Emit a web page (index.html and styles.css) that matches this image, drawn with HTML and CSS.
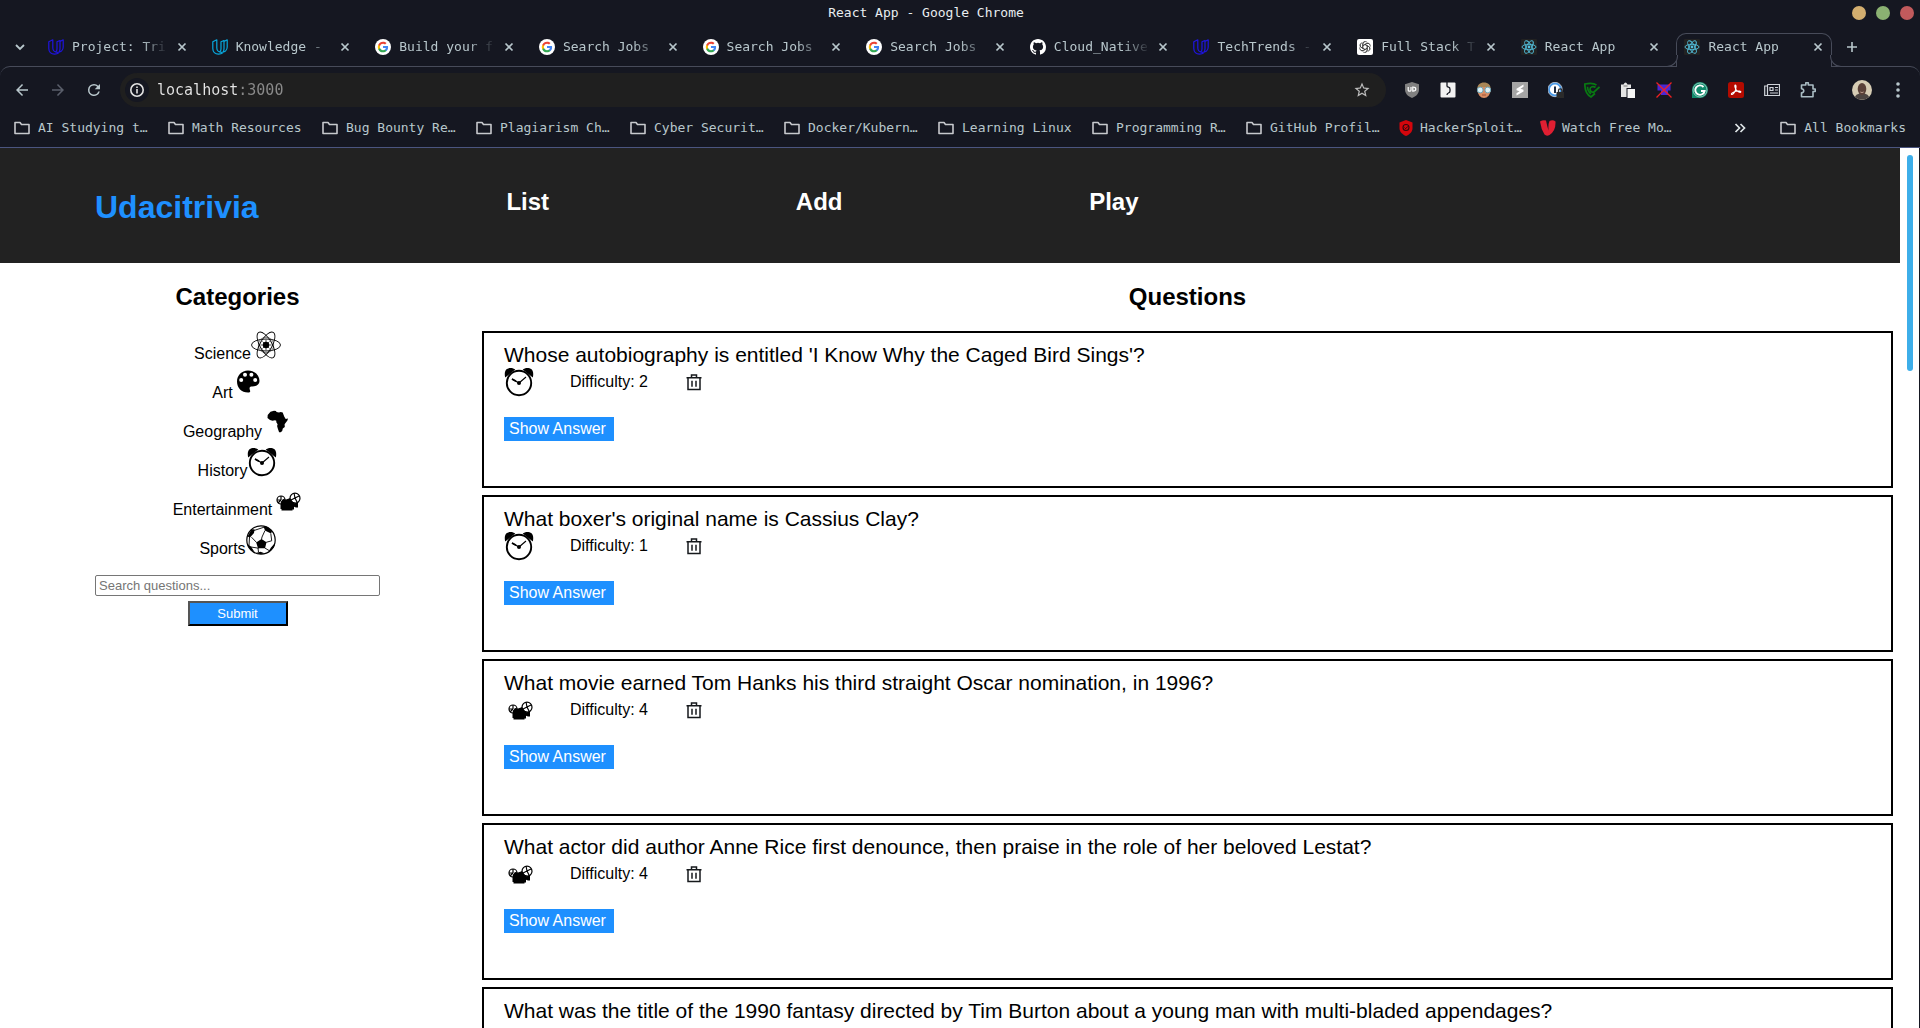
FILE: index.html
```html
<!DOCTYPE html>
<html lang="en">
<head>
<meta charset="utf-8">
<title>React App</title>
<link rel="stylesheet" href="styles.css">
</head>
<body>
<svg class="sprite" aria-hidden="true">
  <symbol id="udacity" viewBox="0 0 16 16"><path d="M.8 2.800 4.800.8V9c0 2.600 2 4.300 4.700 4.300 3 0 5.700-1.800 5.700-5.300V.8L12 2.600v7.200c0 3.300-2 5.300-5.500 5.300C3 15.100.8 12.900.8 9.600zM12 2.600V1.500L9 2.800V10c0 1.500-.4 2.500-1.500 3" fill="none" stroke="currentColor" stroke-width="1.200" stroke-linejoin="round"/></symbol>
  <symbol id="google" viewBox="0 0 32 32"><circle cx="16" cy="16" r="16" fill="#fff"/><g transform="translate(4.500 4.500) scale(.96)"><path fill="#4285f4" d="M22.560 12.250c0-.78-.07-1.530-.2-2.250H12v4.260h5.920a5.060 5.060 0 0 1-2.200 3.320v2.770h3.570c2.080-1.920 3.270-4.740 3.270-8.100z"/><path fill="#34a853" d="M12 23c2.970 0 5.460-.98 7.280-2.660l-3.570-2.770c-.98.66-2.230 1.060-3.710 1.060-2.860 0-5.290-1.930-6.160-4.530H2.180v2.840A11 11 0 0 0 12 23z"/><path fill="#fbbc05" d="M5.840 14.090a6.600 6.600 0 0 1 0-4.180V7.070H2.180a11 11 0 0 0 0 9.860z"/><path fill="#ea4335" d="M12 5.380c1.620 0 3.060.56 4.210 1.640l3.150-3.150C17.450 2.090 14.970 1 12 1A11 11 0 0 0 2.180 7.070l3.660 2.840C6.710 7.310 9.140 5.380 12 5.380z"/></g></symbol>
  <symbol id="github" viewBox="0 0 16 16"><path fill="#fff" d="M8 0C3.580 0 0 3.580 0 8c0 3.540 2.290 6.530 5.470 7.590.4.070.55-.17.55-.38 0-.19-.01-.82-.01-1.490-2.010.37-2.530-.49-2.690-.94-.09-.23-.48-.94-.82-1.130-.28-.15-.68-.52-.01-.53.63-.01 1.080.58 1.230.82.72 1.210 1.870.87 2.330.66.07-.52.28-.87.51-1.070-1.780-.2-3.640-.89-3.640-3.950 0-.87.31-1.590.82-2.150-.08-.2-.36-1.020.08-2.120 0 0 .67-.21 2.200.82a7.600 7.600 0 0 1 4 0c1.530-1.040 2.200-.82 2.200-.82.44 1.100.16 1.920.08 2.120.51.56.82 1.270.82 2.150 0 3.070-1.870 3.750-3.650 3.950.29.25.54.73.54 1.480 0 1.070-.01 1.930-.01 2.200 0 .21.15.46.55.38A8 8 0 0 0 16 8c0-4.420-3.580-8-8-8z"/></symbol>
  <symbol id="openai" viewBox="0 0 16 16"><rect width="16" height="16" rx="2" fill="#fff"/><g fill="none" stroke="#333" stroke-width=".7"><g id="petal"><path d="M5.800 9.200V5a2.500 2.500 0 0 1 4.500-1.500M5.800 6.700 9.400 4.600a2.500 2.500 0 0 1 3.300.8"/></g><use href="#petal" transform="rotate(60 8 8)"/><use href="#petal" transform="rotate(120 8 8)"/><use href="#petal" transform="rotate(180 8 8)"/><use href="#petal" transform="rotate(240 8 8)"/><use href="#petal" transform="rotate(300 8 8)"/></g></symbol>
  <symbol id="react" viewBox="0 0 16 16"><rect width="16" height="16" rx="1" fill="#222"/><g fill="none" stroke="#53c1de" stroke-width=".9"><ellipse cx="8" cy="8" rx="7" ry="2.700"/><ellipse cx="8" cy="8" rx="7" ry="2.700" transform="rotate(60 8 8)"/><ellipse cx="8" cy="8" rx="7" ry="2.700" transform="rotate(120 8 8)"/></g><circle cx="8" cy="8" r="1.400" fill="#53c1de"/></symbol>
  <symbol id="close" viewBox="0 0 16 16"><path d="m4.500 4.500 7 7m0-7-7 7" stroke="currentColor" stroke-width="1.700"/></symbol>
  <symbol id="folder" viewBox="0 0 16 14"><path d="M1 12.500v-11h5l1.500 2H15v9z" fill="none" stroke="currentColor" stroke-width="1.600" stroke-linejoin="round"/></symbol>
  <symbol id="science" viewBox="0 0 30 30"><g fill="none" stroke="#000" stroke-width=".9"><ellipse cx="15" cy="15" rx="14.500" ry="6"/><ellipse cx="15" cy="15" rx="14.500" ry="6" transform="rotate(60 15 15)"/><ellipse cx="15" cy="15" rx="14.500" ry="6" transform="rotate(120 15 15)"/><circle cx="15" cy="15" r="7.700" stroke-width=".5"/><path d="M15 9.500v11M9.500 15h11M11.500 11.500l7 7m0-7-7 7" stroke-width=".7"/></g><circle cx="15" cy="15" r="3.200"/></symbol>
  <symbol id="art" viewBox="0 0 30 30"><path fill-rule="evenodd" transform="translate(0 -2)" d="M15 3.500C8.500 3.500 4 8.500 4 14.500c0 6.500 4.500 11 11 11 1.800 0 2.500-.6 2.100-1.800-1-3-.8-4.200 2-4.200 4.500 0 7.400-2 7.400-5.500 0-6-5-10.500-11.500-10.500zM8.200 10.900a2 2 0 1 1 0 4 2 2 0 0 1 0-4zM12 5.700a2 2 0 1 1 0 4 2 2 0 0 1 0-4zm6.400 0a2 2 0 1 1 0 4 2 2 0 0 1 0-4zm3.800 5.200a2 2 0 1 1 0 4 2 2 0 0 1 0-4z"/></symbol>
  <symbol id="geography" viewBox="0 0 30 30"><path transform="translate(0 -1)" d="m8.500 4.700 3.500-1 2 .3.500 1 2.500.5 1.700-.6 2 .6 1.500 4 1.500 2.600 2.300-.5-.6 2-2.800 3.600.2 2.800-2 1.600-.6 2.300-1.500 1.400h-1.600l-1.400-4-.6-2.200.5-1.800-1.300-2v-1.500l-1.300-.6-2.500.6-2.500-.7L5.500 11l.2-3z"/></symbol>
  <symbol id="history" viewBox="0 0 30 30"><path d="M1.200 10.500C.5 8 .5 4 2.500 2.200 5 .3 9 .5 11.300 2.500zM28.800 10.500c.7-2.500.7-6.500-1.300-8.300C25 .3 21 .5 18.700 2.500z"/><circle cx="15" cy="16" r="12.200" fill="#fff" stroke="#000" stroke-width="1.900"/><path d="m8 12 7 4 7-6" fill="none" stroke="#000" stroke-width="1.100"/><path d="m8 12 4 2.300" stroke="#000" stroke-width="1.800"/><circle cx="15" cy="16" r="2"/></symbol>
  <symbol id="entertainment" viewBox="0 0 30 30"><g fill="none" stroke="#000" stroke-width="1.200"><circle cx="9" cy="14" r="4"/><circle cx="23" cy="12.200" r="5"/><path d="M9 14v-4m0 4H5m4 0-3 3M23 12l4-2m-4 2 2 4m-2-4-1-5m1 5-4 2"/></g><path d="M9 15.500 11 13l3 .5 3-1 1-.5 3 4h1.500v1.500l2-1h1.500v5h-2l-2-.7v2.700h-1.500v1H9.500v-1.500H8.500V18z"/></symbol>
  <symbol id="sports" viewBox="0 0 30 30"><circle cx="15" cy="15" r="14.200" fill="#fff" stroke="#000" stroke-width="1.200"/><path d="m15.500 14 5 3.300-1.500 6h-7l-1.800-5.700zM1.500 11.500 5.500 4.500 8.500 4.300 8 8l-4 4.500zM17.500 1.500l4.500.6 4 4.400-1 2-6-3zM1.500 19l3.500 2.500 3.500 5.500C4 25 2 22 1.500 19zM9.500 28l5-1.200 4 1.500c-3 1.200-6 1-9-.3zM22.500 26.500l2.500-4 4-4.500c-.3 4.500-3 7.500-6.500 8.500z"/><path d="m15.500 14.500.5-2.500L19 5.500M10.700 17.600 5.500 12.200M20.200 17.300l5.500-1.500L24.800 8.500M12 23.100l.5 4M19 23.100l4 2.400M8 5.500l10-3.300M3 20.500l.5-8.500M12.500 23.200 5 22" fill="none" stroke="#000" stroke-width=".9"/></symbol>
  <symbol id="trash" viewBox="0 0 20 20"><path d="M2.500 5.800h15M7.500 5.500V3h5v2.500M4 6v11.500h12V6M8 8.800v6M12 8.800v6" fill="none" stroke="#16191c" stroke-width="1.500"/></symbol>
</svg>

<div class="browser">
  <div class="titlebar">
    <div class="window-title">React App - Google Chrome</div>
    <div class="window-buttons">
      <button class="dot minimise" aria-label="Minimise"></button>
      <button class="dot maximise" aria-label="Maximise"></button>
      <button class="dot shut" aria-label="Close"></button>
    </div>
  </div>

  <div class="tabstrip">
    <button class="tab-search" aria-label="Search tabs"><svg width="12" height="12" viewBox="0 0 12 12"><path d="m2 4 4 4 4-4" fill="none" stroke="currentColor" stroke-width="1.800"/></svg></button>
    <div class="tabs">
      <div class="tab"><svg class="favicon navy"><use href="#udacity"/></svg><span class="tab-name">Project: Tri</span><button class="tab-close" aria-label="Close tab"><svg><use href="#close"/></svg></button></div>
      <div class="tab"><svg class="favicon cyan"><use href="#udacity"/></svg><span class="tab-name">Knowledge - </span><button class="tab-close" aria-label="Close tab"><svg><use href="#close"/></svg></button></div>
      <div class="tab"><svg class="favicon"><use href="#google"/></svg><span class="tab-name">Build your f</span><button class="tab-close" aria-label="Close tab"><svg><use href="#close"/></svg></button></div>
      <div class="tab"><svg class="favicon"><use href="#google"/></svg><span class="tab-name">Search Jobs</span><button class="tab-close" aria-label="Close tab"><svg><use href="#close"/></svg></button></div>
      <div class="tab"><svg class="favicon"><use href="#google"/></svg><span class="tab-name">Search Jobs</span><button class="tab-close" aria-label="Close tab"><svg><use href="#close"/></svg></button></div>
      <div class="tab"><svg class="favicon"><use href="#google"/></svg><span class="tab-name">Search Jobs</span><button class="tab-close" aria-label="Close tab"><svg><use href="#close"/></svg></button></div>
      <div class="tab"><svg class="favicon"><use href="#github"/></svg><span class="tab-name">Cloud_Native</span><button class="tab-close" aria-label="Close tab"><svg><use href="#close"/></svg></button></div>
      <div class="tab"><svg class="favicon navy"><use href="#udacity"/></svg><span class="tab-name">TechTrends -</span><button class="tab-close" aria-label="Close tab"><svg><use href="#close"/></svg></button></div>
      <div class="tab"><svg class="favicon"><use href="#openai"/></svg><span class="tab-name">Full Stack T</span><button class="tab-close" aria-label="Close tab"><svg><use href="#close"/></svg></button></div>
      <div class="tab"><svg class="favicon"><use href="#react"/></svg><span class="tab-name">React App</span><button class="tab-close" aria-label="Close tab"><svg><use href="#close"/></svg></button></div>
      <div class="tab active"><svg class="favicon"><use href="#react"/></svg><span class="tab-name">React App</span><button class="tab-close" aria-label="Close tab"><svg><use href="#close"/></svg></button></div>
    </div>
    <button class="new-tab" aria-label="New tab"><svg width="12" height="12" viewBox="0 0 12 12"><path d="M6 1v10M1 6h10" stroke="currentColor" stroke-width="1.600"/></svg></button>
  </div>

  <div class="toolbar">
    <div class="nav-buttons">
      <button aria-label="Back"><svg width="18" height="18" viewBox="0 0 24 24"><path fill="currentColor" d="M20 11H7.830l5.590-5.590L12 4l-8 8 8 8 1.410-1.410L7.830 13H20z"/></svg></button>
      <button class="disabled" aria-label="Forward"><svg width="18" height="18" viewBox="0 0 24 24"><path fill="currentColor" d="M4 13h12.170l-5.590 5.590L12 20l8-8-8-8-1.410 1.410L16.170 11H4z"/></svg></button>
      <button aria-label="Reload"><svg width="18" height="18" viewBox="0 0 24 24"><path fill="currentColor" d="M17.650 6.350A7.960 7.960 0 0 0 12 4a8 8 0 1 0 7.730 10h-2.080A6 6 0 1 1 12 6c1.660 0 3.140.69 4.220 1.780L13 11h7V4z"/></svg></button>
    </div>
    <div class="omnibox">
      <button class="site-info" aria-label="Site information"><svg width="16" height="16" viewBox="0 0 16 16"><circle cx="8" cy="8" r="6.200" fill="none" stroke="#e3e3e3" stroke-width="1.600"/><path d="M8 7v4.500M8 4.500v1.600" stroke="#e3e3e3" stroke-width="1.600"/></svg></button>
      <input class="address" type="text" aria-label="Address" value="localhost:3000">
      <button class="bookmark-star" aria-label="Bookmark this page"><svg width="18" height="18" viewBox="0 0 24 24"><path fill="#bdbdbd" d="M22 9.240l-7.190-.62L12 2 9.190 8.630 2 9.240l5.460 4.730L5.820 21 12 17.270 18.180 21l-1.630-7.030zM12 15.400l-3.760 2.270 1-4.280-3.320-2.880 4.380-.38L12 6.100l1.710 4.040 4.380.38-3.320 2.880 1 4.280z"/></svg></button>
    </div>
    <div class="extensions">
      <button aria-label="Shield"><svg viewBox="0 0 16 16"><path d="m8 0 7 2.300v5.200c0 4-3 7-7 8.500-4-1.500-7-4.500-7-8.500V2.300z" fill="#808080"/><path d="M4.200 5v3.200q0 1 1.400 1T7 8.200V5M8.800 5v4.200q3 0 3-2.100T8.800 5z" fill="none" stroke="#fff" stroke-width="1.200"/></svg></button>
      <button aria-label="Split"><svg viewBox="0 0 16 16"><rect x=".5" y=".5" width="15" height="15" rx="1" fill="#f2f2f2"/><path d="M7 0v4q0 1 1.500 1.200 1.500.3 1.500 2V9q0 1.500-1.500 2T7 13" fill="none" stroke="#151721" stroke-width="1.300"/></svg></button>
      <button aria-label="Reader"><svg viewBox="0 0 16 16"><ellipse cx="8" cy="8.500" rx="6.500" ry="7.500" fill="#d98c62"/><path d="M1.500 7C1 3 4 .5 8 .5S15 3 14.500 7L13 5H4z" fill="#a98656"/><circle cx="4.200" cy="8" r="2.900" fill="#dff1f6" stroke="#6fa4b4"/><circle cx="11.800" cy="8" r="2.900" fill="#dff1f6" stroke="#6fa4b4"/><path d="M6 13h4" stroke="#9c5238"/></svg></button>
      <button aria-label="Stack"><svg viewBox="0 0 16 16"><rect width="16" height="16" fill="#a5a5a5"/><path d="M11.500 2.500 4.500 6.700v1.600l3 1-3 2v2.200l7-4V7.800l-3-1 3-2z" fill="#fff"/></svg></button>
      <button aria-label="Password manager"><svg viewBox="0 0 16 16"><circle cx="7" cy="7.500" r="6" fill="#fff" stroke="#4a9ae8" stroke-width="1.800"/><circle cx="7" cy="7.500" r="7.200" fill="none" stroke="#e8f1fb" stroke-width=".7"/><path d="M7 4.500v6.500" stroke="#1c2c45" stroke-width="2"/><path d="M8.500 10h7.500v6H8.500z" fill="#2a2a2a"/><path d="M10.500 10V8.500a1.700 1.700 0 0 1 3.400 0V10" fill="none" stroke="#2a2a2a" stroke-width="1.300"/></svg></button>
      <button aria-label="Safe browsing"><svg viewBox="0 0 16 16"><path d="M12.500 3.200C10 1 5 1.200.8 2c0 6 1.700 10.500 6.200 13l4-3.500M3.500 4.800c.2 3.700 1.300 5.700 3.500 7M11.500 5.500C9.500 3.800 6 4.500 6 7.200c.2 2.300 2 3 3.500 3.300L15.500 5" fill="none" stroke="#087a12" stroke-width="1.700"/></svg></button>
      <button aria-label="Clipboard"><svg viewBox="0 0 16 16"><path d="M1 2.500h2.500q2-4 4 0H11V6H6.500v9H1z" fill="#e4e4e4"/><path d="M7.500 7h7.500v9H7.500z" fill="#f5f5f5"/><path d="M3.500 4h4" stroke="#777"/></svg></button>
      <button aria-label="Blocker"><svg viewBox="0 0 16 16"><path d="M1.500 2.500h13v6H12V13H5V8.500H1.500z" fill="#4a28d5"/><path d="m.5.5 15 15m0-15-15 15" stroke="#f02020" stroke-width="1.300"/></svg></button>
      <button aria-label="Grammar"><svg viewBox="0 0 16 16"><path d="M0 16V8a8 8 0 1 1 8 8z" fill="#118a6c"/><path d="M11.500 5A4.700 4.700 0 1 0 12.600 9H9" fill="none" stroke="#fff" stroke-width="1.900"/><circle cx="8" cy="8" r="7" fill="none" stroke="#d3eee8" stroke-width=".6"/></svg></button>
      <button aria-label="PDF"><svg viewBox="0 0 16 16"><rect width="16" height="16" rx="2.500" fill="#b30b00"/><path d="M7.300 3c1.200 0 .7 3.500 0 5.500-.8 2-2.500 4.500-3.700 4-1-.7 1.500-2.600 4.400-3.200 2.500-.5 5.200-.3 4.800.7-.5 1-3.300-.4-4.500-2C7 6.300 6.300 3 7.300 3z" fill="none" stroke="#fff" stroke-width="1.100"/></svg></button>
      <button aria-label="News"><svg viewBox="0 0 16 16"><path d="M3.500 2.500h12v11H.7V4h2.800M3.500 2.500v11M6 5.500h3v3H6zM11 5.500h3M11 8h3M6 11h8" fill="none" stroke="#d0d4da" stroke-width="1.200"/></svg></button>
      <button aria-label="Extensions"><svg viewBox="0 0 16 16"><path d="M1.500 3h4.300V.8h2.500V3H13v4h2.200v2.500H13v5.200H1.500v-4c3 0 3-4 0-4z" fill="none" stroke="#a9bcc3" stroke-width="1.600" stroke-linejoin="round"/></svg></button>
    </div>
    <button class="avatar" aria-label="Profile"><svg width="20" height="20" viewBox="0 0 20 20"><circle cx="10" cy="10" r="10" fill="#d6ccb4"/><path d="M3 17c1-3 4-3.500 7-3.500s6 .5 7 3.500a10 10 0 0 1-14 0z" fill="#4d4542"/><ellipse cx="10" cy="9" rx="4.300" ry="6" fill="#5a4038"/><path d="M8.300 12q1.700 1.200 3.400 0" stroke="#b89a8a" fill="none"/></svg></button>
    <button class="menu" aria-label="Menu"><svg width="4" height="18" viewBox="0 0 4 18"><g fill="#b8c7cc"><circle cx="2" cy="3" r="1.800"/><circle cx="2" cy="9" r="1.800"/><circle cx="2" cy="15" r="1.800"/></g></svg></button>
  </div>

  <nav class="bookmarks" aria-label="Bookmarks">
    <a class="bookmark" href="#"><svg><use href="#folder"/></svg>AI Studying t…</a>
    <a class="bookmark" href="#"><svg><use href="#folder"/></svg>Math Resources</a>
    <a class="bookmark" href="#"><svg><use href="#folder"/></svg>Bug Bounty Re…</a>
    <a class="bookmark" href="#"><svg><use href="#folder"/></svg>Plagiarism Ch…</a>
    <a class="bookmark" href="#"><svg><use href="#folder"/></svg>Cyber Securit…</a>
    <a class="bookmark" href="#"><svg><use href="#folder"/></svg>Docker/Kubern…</a>
    <a class="bookmark" href="#"><svg><use href="#folder"/></svg>Learning Linux</a>
    <a class="bookmark" href="#"><svg><use href="#folder"/></svg>Programming R…</a>
    <a class="bookmark folder-last" href="#"><svg><use href="#folder"/></svg>GitHub Profil…</a>
    <a class="bookmark site" href="#"><svg viewBox="0 0 16 16"><path d="m8 0 6.500 2.500V8c0 4-3 6.500-6.500 8-3.500-1.500-6.500-4-6.500-8V2.500z" fill="#d4060c"/><circle cx="8" cy="7.500" r="3" fill="none" stroke="#33080d" stroke-width="1.100"/><path d="m6.500 7.500 1.200 1.200L10 6.300" fill="none" stroke="#33080d"/></svg>HackerSploit…</a>
    <a class="bookmark site" href="#"><svg viewBox="0 0 16 16"><path d="M0 1.500Q3-.5 6 .5q1 5 2.500 10Q8 4 9.500 1q3.500-1.500 6 .5Q16 11 9.500 15q-3 1.500-5-.5Q1 9 0 1.500z" fill="#e01f32"/></svg>Watch Free Mo…</a>
    <button class="overflow" aria-label="More bookmarks"><svg width="12" height="12" viewBox="0 0 12 12"><path d="m1.500 2 4 4-4 4m5-8 4 4-4 4" fill="none" stroke="#dfe6e8" stroke-width="1.700"/></svg></button>
    <a class="bookmark all" href="#"><svg><use href="#folder"/></svg>All Bookmarks</a>
  </nav>

  <div class="viewport">
    <div class="page">
      <header class="app-header">
        <h1>Udacitrivia</h1>
        <nav class="app-nav" aria-label="Main">
          <a href="#">List</a>
          <a href="#">Add</a>
          <a href="#">Play</a>
        </nav>
      </header>
      <div class="columns">
        <aside class="categories">
          <h2>Categories</h2>
          <ul>
            <li><span>Science</span><svg><use href="#science"/></svg></li>
            <li><span>Art</span><svg><use href="#art"/></svg></li>
            <li><span>Geography</span><svg><use href="#geography"/></svg></li>
            <li><span>History</span><svg><use href="#history"/></svg></li>
            <li><span>Entertainment</span><svg><use href="#entertainment"/></svg></li>
            <li><span>Sports</span><svg><use href="#sports"/></svg></li>
          </ul>
          <form class="search">
            <input type="text" placeholder="Search questions..." aria-label="Search questions">
            <button type="button">Submit</button>
          </form>
        </aside>
        <main class="questions">
          <h2>Questions</h2>
          <div class="list">
            <article class="question">
              <p class="text">Whose autobiography is entitled 'I Know Why the Caged Bird Sings'?</p>
              <div class="status"><svg class="category"><use href="#history"/></svg><span>Difficulty: 2</span><button class="delete" aria-label="Delete"><svg><use href="#trash"/></svg></button></div>
              <button class="show">Show Answer</button>
            </article>
            <article class="question">
              <p class="text">What boxer's original name is Cassius Clay?</p>
              <div class="status"><svg class="category"><use href="#history"/></svg><span>Difficulty: 1</span><button class="delete" aria-label="Delete"><svg><use href="#trash"/></svg></button></div>
              <button class="show">Show Answer</button>
            </article>
            <article class="question">
              <p class="text">What movie earned Tom Hanks his third straight Oscar nomination, in 1996?</p>
              <div class="status"><svg class="category"><use href="#entertainment"/></svg><span>Difficulty: 4</span><button class="delete" aria-label="Delete"><svg><use href="#trash"/></svg></button></div>
              <button class="show">Show Answer</button>
            </article>
            <article class="question">
              <p class="text">What actor did author Anne Rice first denounce, then praise in the role of her beloved Lestat?</p>
              <div class="status"><svg class="category"><use href="#entertainment"/></svg><span>Difficulty: 4</span><button class="delete" aria-label="Delete"><svg><use href="#trash"/></svg></button></div>
              <button class="show">Show Answer</button>
            </article>
            <article class="question">
              <p class="text">What was the title of the 1990 fantasy directed by Tim Burton about a young man with multi-bladed appendages?</p>
            </article>
          </div>
        </main>
      </div>
    </div>
    <div class="scrollbar"><div class="thumb"></div></div>
  </div>
</div>
</body>
</html>
```
FILE: styles.css
```css
* { box-sizing: border-box; }

body {
  margin: 0;
  background: #151721;
  color: #000;
  font: 16px "Liberation Sans", Arial, sans-serif;
}

button {
  margin: 0;
  padding: 0;
  border: 0;
  background: none;
  color: inherit;
  font: inherit;
}

a { color: inherit; text-decoration: none; }
svg { display: block; flex: none; }
.sprite { position: absolute; width: 0; height: 0; }

/* Browser frame */
.browser {
  display: flex;
  flex-direction: column;
  height: 100vh;
  overflow: hidden;
  color: #b8c7cc;
  font: 13px/16px "DejaVu Sans Mono", monospace;
}

.titlebar {
  display: flex;
  align-items: center;
  height: 26px;
  flex: none;
  padding-right: 6px;
}
.window-title { flex: 1; text-align: center; color: #e9edf0; }
.window-buttons { display: flex; gap: 10px; }
.dot { width: 14px; height: 14px; border-radius: 50%; }
.minimise { background: #d3ae6f; }
.maximise { background: #8bb172; }
.shut { background: #c15a5c; }

.tabstrip {
  display: flex;
  height: 40px;
  flex: none;
  padding-top: 7px;
}
.tab-search { display: grid; place-items: center; width: 40px; height: 28px; }
.tabs { display: flex; gap: 8px; flex: 1; min-width: 0; }
.tab {
  position: relative;
  display: flex;
  align-items: center;
  flex: 1 1 0;
  min-width: 0;
  height: 34px;
  padding: 0 5px 8px 7px;
  border: 1px solid transparent;
  border-bottom: 0;
}
.favicon { width: 16px; height: 16px; margin-right: 8px; }
.navy { color: #1f14e0; }
.cyan { color: #08a9df; }
.tab-name {
  flex: 1;
  overflow: hidden;
  white-space: pre;
  mask-image: linear-gradient(90deg, #000 70px, transparent 96px);
}
.tab-close svg { width: 16px; height: 16px; }
.tab.active {
  z-index: 1;
  border-color: #474b59;
  border-radius: 10px 10px 0 0;
  background: #151721;
}
.tab.active::before,
.tab.active::after {
  content: "";
  position: absolute;
  bottom: 0;
  width: 11px;
  height: 11px;
  border-bottom: 1px solid #474b59;
  background: #151721;
}
.tab.active::before { right: 100%; border-right: 1px solid #474b59; border-bottom-right-radius: 11px; margin-right: -1px; }
.tab.active::after { left: 100%; border-left: 1px solid #474b59; border-bottom-left-radius: 11px; margin-left: -1px; }
.new-tab { display: grid; place-items: center; width: 40px; height: 28px; margin-right: 48px; }

.toolbar {
  display: flex;
  align-items: center;
  height: 47px;
  flex: none;
  padding: 0 12px;
  border-top: 1px solid #474b59;
  border-radius: 10px 10px 0 0;
}
.nav-buttons { display: flex; gap: 18px; width: 108px; padding-left: 1px; }
.disabled { color: #5a5f6b; }
.omnibox {
  display: flex;
  align-items: center;
  flex: 1;
  height: 34px;
  padding: 0 15px 0 5px;
  border-radius: 17px;
  background: #1f1f1f;
}
.site-info {
  display: grid;
  place-items: center;
  width: 24px;
  height: 24px;
  border-radius: 50%;
  background: #151721;
}
.address {
  flex: 1;
  min-width: 0;
  margin-left: 8px;
  padding: 0;
  border: 0;
  outline: 0;
  background: linear-gradient(90deg, #e6e6e6 81px, #8b8b8b 81px);
  background-clip: text;
  color: transparent;
  font: 15px/20px "DejaVu Sans Mono", monospace;
}
.extensions { display: flex; gap: 20px; margin-left: 18px; }
.extensions svg { width: 16px; height: 16px; }
.avatar { margin-left: 36px; }
.menu { margin: 0 8px 0 24px; }

.bookmarks {
  display: flex;
  align-items: center;
  gap: 18px;
  height: 35px;
  flex: none;
  padding: 0 14px 5px;
  border-bottom: 1px solid #4b5580;
}
.bookmark { display: flex; align-items: center; gap: 8px; width: 136px; white-space: nowrap; }
.bookmark svg { width: 16px; height: 14px; color: #c7c9cd; }
.bookmark.folder-last { width: 134px; }
.bookmark.site { gap: 6px; width: 124px; }
.bookmark.site svg { height: 16px; }
.overflow { margin-left: auto; }
.bookmark.all { width: auto; margin-left: 16px; }

/* Web page */
.viewport {
  display: flex;
  flex: 1;
  min-height: 0;
  margin-right: 1px;
  background: #fff;
  color: #000;
  font: 16px/20px "Liberation Sans", Arial, sans-serif;
}
.page { flex: 1; min-width: 0; overflow: hidden; }
.scrollbar { width: 19px; padding: 7px 6px 0 7px; }
.thumb { height: 216px; border-radius: 3px; background: #3daee9; }

.app-header {
  display: flex;
  min-height: 115px;
  padding: 40px 5% 0;
  background: #222;
  color: #fff;
}
.app-header h1 { width: 24%; margin: 0; color: #1e90ff; font-size: 32px; line-height: 38px; }
.app-nav { display: flex; flex: 1; gap: 19%; padding-left: 1px; font-size: 24px; font-weight: bold; line-height: 27px; }

.columns { display: grid; grid-template-columns: 1fr 3fr; }
h2 { margin: 20px 0; font-size: 24px; line-height: 27px; text-align: center; }

.categories { padding: 0 20%; }
.categories ul {
  display: flex;
  flex-direction: column;
  gap: 5px;
  margin: 0;
  padding: 0;
  list-style: none;
}
.categories li { display: flex; align-items: flex-end; justify-content: center; height: 34px; }
.categories li svg { align-self: flex-start; width: 30px; height: 30px; }
.search { display: flex; flex-direction: column; align-items: center; gap: 5px; margin-top: 16px; }
.search input {
  width: 100%;
  height: 21px;
  padding: 1px 3px;
  border: 1px solid #767676;
  border-radius: 2px;
  font: 13px "Liberation Sans", Arial, sans-serif;
}
.search input::placeholder { color: #757575; }
.search button {
  width: 100px;
  height: 25px;
  border: 2px solid #000;
  border-top-color: #555;
  border-left-color: #555;
  background: #1e90ff;
  color: #fff;
  font-size: 13px;
}

.list { display: flex; flex-direction: column; gap: 7px; padding: 1px 7px 0; }
.question {
  min-height: 157px;
  padding: 10px 20px 45px;
  border: 2px solid #000;
}
.text { margin: 0; font-size: 21px; line-height: 24px; }
.status { display: flex; align-items: center; gap: 36px; height: 30px; margin-bottom: 20px; }
.category { width: 30px; height: 30px; }
.delete svg { width: 20px; height: 20px; }
.show { display: block; height: 24px; padding: 0 8px 0 5px; background: #1e90ff; color: #fff; }
```
